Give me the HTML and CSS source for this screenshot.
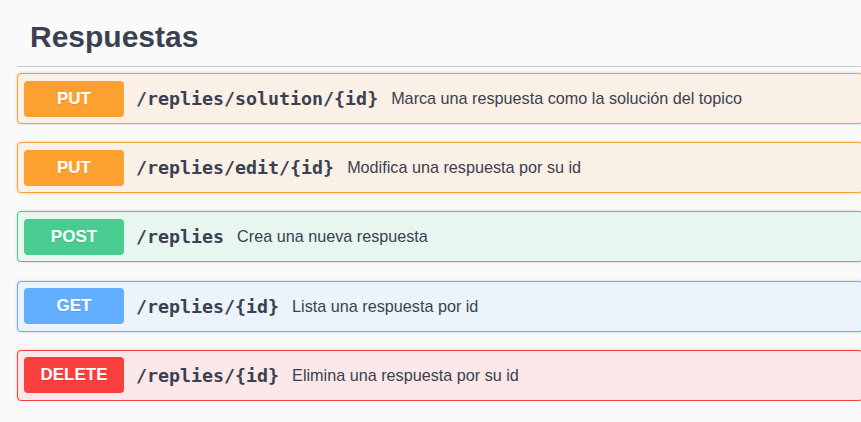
FILE: index.html
```html
<!DOCTYPE html>
<html lang="es">
<head>
<meta charset="utf-8">
<title>Respuestas</title>
<link rel="stylesheet" href="styles.css">
</head>
<body>
<div class="tag-section">
  <h3 class="tag-title">Respuestas</h3>
  <div class="ops">
    <div class="op op-put">
      <span class="method">PUT</span>
      <span class="path">/replies/solution/{id}</span>
      <span class="desc">Marca una respuesta como la solución del topico</span>
    </div>
    <div class="op op-put">
      <span class="method">PUT</span>
      <span class="path">/replies/edit/{id}</span>
      <span class="desc">Modifica una respuesta por su id</span>
    </div>
    <div class="op op-post">
      <span class="method">POST</span>
      <span class="path">/replies</span>
      <span class="desc">Crea una nueva respuesta</span>
    </div>
    <div class="op op-get">
      <span class="method">GET</span>
      <span class="path">/replies/{id}</span>
      <span class="desc">Lista una respuesta por id</span>
    </div>
    <div class="op op-delete">
      <span class="method">DELETE</span>
      <span class="path">/replies/{id}</span>
      <span class="desc">Elimina una respuesta por su id</span>
    </div>
  </div>
</div>
</body>
</html>
```

FILE: styles.css
```css
html, body {
  margin: 0;
  padding: 0;
  background: #fafafa;
  overflow: hidden;
}

body {
  font-family: "Liberation Sans", Arial, sans-serif;
  color: #3b4151;
}

.tag-section {
  margin-right: -2px;
  padding: 8px 0 0 17px;
}

.tag-title {
  margin: 0 0 6px;
  padding: 13px 0 13px 13px;
  font-size: 30px;
  line-height: 32px;
  font-weight: 700;
  color: #3b4151;
  border-bottom: 1px solid #c9cacc;
}

.ops {
  display: flex;
  flex-direction: column;
  gap: 18.2px;
}

.op {
  display: flex;
  align-items: center;
  height: 49px;
  padding: 0 6px;
  border: 1px solid;
  border-radius: 4px;
  box-shadow: 0 0 3px rgba(0, 0, 0, 0.19);
}

.method {
  flex: none;
  width: 100px;
  height: 36px;
  display: flex;
  align-items: center;
  justify-content: center;
  border-radius: 4px;
  color: #fff;
  font-weight: 700;
  font-size: 17px;
  text-shadow: 0 1px 0 rgba(0, 0, 0, 0.1);
}

.path {
  margin-left: 12px;
  font-family: "DejaVu Sans Mono", "Liberation Mono", monospace;
  font-weight: 700;
  font-size: 18.3px;
  color: #3b4151;
}

.desc {
  margin-left: 13px;
  font-size: 16.2px;
  color: #3b4151;
}

.op-put { background: #faf0e6; border-color: #fca130; }
.op-put .method { background: #fca130; }

.op-post { background: #e8f6f0; border-color: #49cc90; }
.op-post .method { background: #49cc90; }

.op-get { background: #ebf3fb; border-color: #61affe; }
.op-get .method { background: #61affe; }

.op-delete { background: #fae7e7; border-color: #f93e3e; }
.op-delete .method { background: #f93e3e; }
```
